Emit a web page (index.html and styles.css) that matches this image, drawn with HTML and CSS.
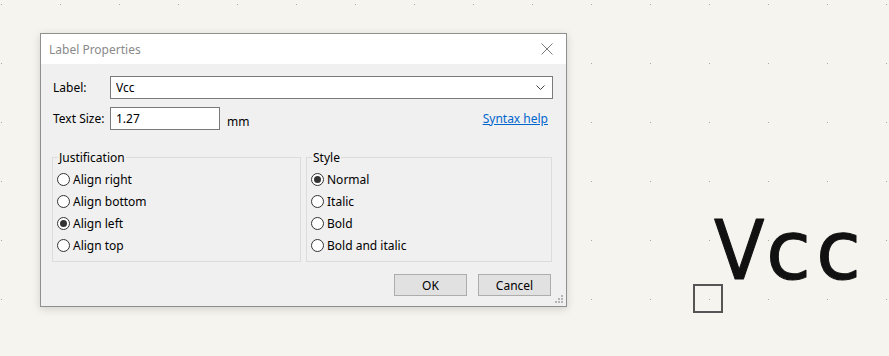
FILE: index.html
```html
<!DOCTYPE html>
<html lang="en">
<head>
    <meta charset="UTF-8">
    <title>Label Properties</title>
    <link rel="stylesheet" href="styles.css">
</head>
<body>

<div class="canvas">
    <svg class="grid" width="889" height="356">
        <defs>
            <pattern id="dots" x="1" y="4" width="59" height="59" patternUnits="userSpaceOnUse">
                <rect width="1" height="1" fill="#a8a8a8"></rect>
            </pattern>
        </defs>
        <rect width="889" height="356" fill="url(#dots)"></rect>
        <text class="net-label" x="714 766 816" y="279">V<tspan class="round">cc</tspan></text>
    </svg>
    <div class="anchor"></div>
</div>

<div class="dialog">
    <div class="titlebar">
        <span class="title">Label Properties</span>
        <svg class="close" width="12" height="12" viewBox="0 0 12 12">
            <path d="M0.5 0.5 L11.5 11.5 M11.5 0.5 L0.5 11.5" stroke="#7a7a7a" stroke-width="1" fill="none"/>
        </svg>
    </div>
    <div class="client">
        <div class="row">
            <label class="row-label" for="label">Label:</label>
            <div class="combo">
                <input type="text" id="label" value="Vcc">
                <svg width="9" height="6" viewBox="0 0 9 6">
                    <path d="M0.5 0.5 L4.5 4.5 L8.5 0.5" stroke="#444" stroke-width="1" fill="none"/>
                </svg>
            </div>
        </div>
        <div class="row">
            <label class="row-label" for="size">Text Size:</label>
            <input type="text" id="size" class="size-input" value="1.27">
            <span class="unit">mm</span>
            <a class="help" href="#">Syntax help</a>
        </div>

        <div class="groups">
            <fieldset class="group justify">
                <legend>Justification</legend>
                <label class="radio"><input type="radio" name="just"> Align right</label>
                <label class="radio"><input type="radio" name="just"> Align bottom</label>
                <label class="radio"><input type="radio" name="just" checked> Align left</label>
                <label class="radio"><input type="radio" name="just"> Align top</label>
            </fieldset>
            <fieldset class="group style">
                <legend>Style</legend>
                <label class="radio"><input type="radio" name="style" checked> Normal</label>
                <label class="radio"><input type="radio" name="style"> Italic</label>
                <label class="radio"><input type="radio" name="style"> Bold</label>
                <label class="radio"><input type="radio" name="style"> Bold and italic</label>
            </fieldset>
        </div>

        <div class="buttons">
            <button>OK</button>
            <button>Cancel</button>
        </div>
        <svg class="grip" width="9" height="9" viewBox="0 0 9 9">
            <rect x="6" y="0" width="2" height="2" fill="#b5b5b5"/>
            <rect x="3" y="3" width="2" height="2" fill="#b5b5b5"/>
            <rect x="6" y="3" width="2" height="2" fill="#b5b5b5"/>
            <rect x="0" y="6" width="2" height="2" fill="#b5b5b5"/>
            <rect x="3" y="6" width="2" height="2" fill="#b5b5b5"/>
            <rect x="6" y="6" width="2" height="2" fill="#b5b5b5"/>
        </svg>
    </div>
</div>

</body>
</html>
```

FILE: styles.css
```css
body {
    margin: 0;
    padding: 0;
    width: 889px;
    height: 356px;
    overflow: hidden;
    background-color: #f5f4ef;
    font-family: "Noto Sans", "Open Sans", sans-serif;
    font-size: 12px;
    color: #000;
}
.canvas {
    position: absolute;
    left: 0;
    top: 0;
    width: 889px;
    height: 356px;
}
.grid {
    position: absolute;
    left: 0;
    top: 0;
}
.net-label {
    font-family: "DejaVu Sans Condensed", "DejaVu Sans", sans-serif;
    font-stretch: condensed;
    font-size: 82px;
    fill: #111;
    stroke: #111;
    stroke-width: 1px;
    stroke-linejoin: round;
}
.net-label .round {
    font-family: "DejaVu Sans", sans-serif;
    font-stretch: normal;
}
.anchor {
    position: absolute;
    left: 693px;
    top: 284px;
    width: 26px;
    height: 25px;
    border: 2px solid #555;
}
.dialog {
    position: absolute;
    left: 40px;
    top: 33px;
    width: 525px;
    height: 272px;
    border: 1px solid #8f8f8f;
    box-shadow: 0 2px 8px rgba(0, 0, 0, 0.15);
    background-color: #f0f0f0;
}
.titlebar {
    height: 30px;
    background-color: #fff;
    display: flex;
    align-items: center;
    justify-content: space-between;
    padding: 0 13px 0 8px;
}
.title {
    color: #8a8a8a;
}
.client {
    position: relative;
    padding: 12px 12px 0 12px;
    height: 230px;
}
.row {
    display: flex;
    align-items: center;
    margin-bottom: 7px;
}
.row-label {
    width: 57px;
}
input[type="text"] {
    font-family: inherit;
    font-size: 12px;
    border: 1px solid #7a7a7a;
    background-color: #fff;
    padding: 0 5px;
    height: 23px;
    box-sizing: border-box;
    outline: none;
}
.combo {
    flex: 1;
    display: flex;
    align-items: center;
    height: 23px;
    border: 1px solid #7a7a7a;
    background-color: #fff;
    margin-right: 1px;
    box-sizing: border-box;
    padding-right: 7px;
}
.combo input[type="text"] {
    border: none;
    flex: 1;
    height: 21px;
}
.size-input {
    width: 110px;
}
.unit {
    margin: 7px 0 0 7px;
}
.help {
    margin-left: auto;
    margin-right: 6px;
    color: #0066cc;
}
.groups {
    display: flex;
    gap: 5px;
    margin: 19px 0 0 -1px;
}
.group {
    margin: 0;
    padding: 2px 3px 9px 4px;
    border: 1px solid #dcdcdc;
    height: 113px;
    box-sizing: border-box;
    min-width: 0;
}
.group legend {
    padding: 0 1px;
    margin-left: 1px;
}
.justify {
    width: 249px;
}
.style {
    width: 246px;
}
.radio {
    display: flex;
    align-items: center;
    height: 22px;
}
.radio input {
    appearance: none;
    width: 13px;
    height: 13px;
    margin: 0 3px 0 0;
    border: 1px solid #333;
    border-radius: 50%;
    background-color: #fff;
    box-sizing: border-box;
    position: relative;
}
.radio input:checked::after {
    content: "";
    position: absolute;
    left: 2px;
    top: 2px;
    width: 7px;
    height: 7px;
    border-radius: 50%;
    background-color: #333;
}
.buttons {
    display: flex;
    justify-content: flex-end;
    gap: 11px;
    margin-top: 12px;
    padding-right: 3px;
}
.buttons button {
    width: 73px;
    height: 22px;
    font-family: inherit;
    font-size: 12px;
    background-color: #e1e1e1;
    border: 1px solid #adadad;
    padding: 0;
}
.grip {
    position: absolute;
    right: 2px;
    bottom: 2px;
}
```
